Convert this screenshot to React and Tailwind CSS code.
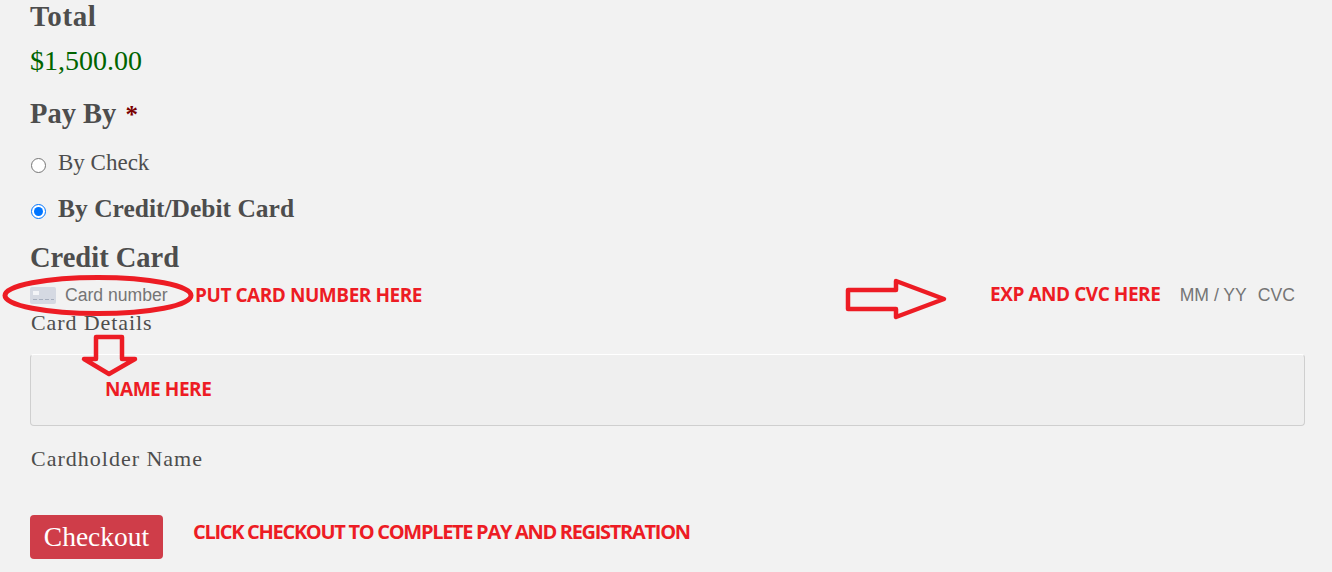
const serif = "font-['Georgia','Liberation_Serif',serif]";
const note = "font-['Open_Sans',sans-serif] font-bold text-[#ed1c24]";

function Radio({ checked }) {
  return (
    <span
      className={`w-[15px] h-[15px] rounded-full border bg-white shrink-0 flex items-center justify-center mt-[4px] ${
        checked ? "border-[#0075ff]" : "border-[#767676]"
      }`}
    >
      {checked && <span className="w-[9px] h-[9px] rounded-full bg-[#0075ff]" />}
    </span>
  );
}

function CardIcon() {
  return (
    <svg width="26" height="17" viewBox="0 0 26 17" className="shrink-0">
      <rect width="26" height="17" rx="2" fill="#d5d9e2" />
      <rect x="3" y="4" width="6" height="4" fill="#f3f4f7" />
      <path d="M3 12.5h4M9 12.5h4M15 12.5h4M21 12.5h3" stroke="#a6aebd" strokeWidth="1.2" />
    </svg>
  );
}

function Outline({ d, className, width, height }) {
  return (
    <svg width={width} height={height} viewBox={`0 0 ${width} ${height}`} className={className} fill="none">
      <path d={d} stroke="#ed1c24" strokeWidth="4.5" strokeLinejoin="round" />
    </svg>
  );
}

export default function App() {
  return (
    <div className={`relative w-[1332px] h-[572px] overflow-hidden bg-[#f2f2f2] pl-[30px] pr-[27px] text-[#4d4d4d] ${serif}`}>
      <h2 className="h-[32px] text-[29px] leading-[32px] font-bold tracking-[0.6px]">Total</h2>
      <p className="mt-[13px] h-[32px] text-[28px] leading-[32px] text-[#006400]">$1,500.00</p>
      <h2 className="mt-[21px] h-[32px] text-[28.5px] leading-[32px] font-bold">
        Pay By <span className="ml-[2px] text-[25px] text-[#7a0000]">*</span>
      </h2>
      <label className="mt-[18px] h-[30px] flex items-center gap-[12px] pl-[1px] text-[23px] leading-[30px]">
        <Radio />
        By Check
      </label>
      <label className="mt-[16px] h-[30px] flex items-center gap-[12px] pl-[1px] text-[25.5px] leading-[30px] font-bold">
        <Radio checked />
        By Credit/Debit Card
      </label>
      <h2 className="mt-[18px] h-[32px] text-[28.5px] leading-[32px] font-bold">Credit Card</h2>

      <div className="mt-[11px] h-[20px] flex items-center justify-between font-['Liberation_Sans',sans-serif] text-[17.6px] text-[#757575]">
        <div className="flex items-center gap-[9px]">
          <CardIcon />
          <span>Card number</span>
        </div>
        <div className="flex gap-[11px] pr-[10px]">
          <span>MM / YY</span>
          <span>CVC</span>
        </div>
      </div>

      <p className="mt-[6px] h-[24px] pl-[1px] text-[22px] leading-[24px] tracking-[0.9px]">Card Details</p>
      <div className="mt-[19px] h-[72px] rounded-[4px] border border-[#cfcfcf] border-t-white bg-[#efefef]" />
      <p className="mt-[21px] h-[24px] pl-[1px] text-[22px] leading-[24px] tracking-[1px]">Cardholder Name</p>

      <div className="mt-[44px] flex items-start">
        <button className="w-[133px] h-[44px] rounded-[4px] bg-[#cf3d49] text-[27.5px] leading-[42px] text-white">Checkout</button>
        <span className={`ml-[30px] mt-[4px] text-[20px] leading-[26px] tracking-[-1.3px] ${note}`}>CLICK CHECKOUT TO COMPLETE PAY AND REGISTRATION</span>
      </div>

      {/* annotations drawn on top of the form */}
      <svg width="196" height="44" viewBox="0 0 196 44" fill="none" className="absolute left-[2px] top-[274px]">
        <ellipse cx="96" cy="21.5" rx="93" ry="18" stroke="#ed1c24" strokeWidth="5" />
      </svg>
      <span className={`absolute left-[195px] top-[282px] text-[19px] leading-[26px] tracking-[-0.45px] ${note}`}>PUT CARD NUMBER HERE</span>
      <span className={`absolute left-[990px] top-[281px] text-[19px] leading-[26px] tracking-[-0.45px] ${note}`}>EXP AND CVC HERE</span>
      <span className={`absolute left-[105px] top-[376px] text-[19px] leading-[26px] tracking-[-0.45px] ${note}`}>NAME HERE</span>
      <Outline
        className="absolute left-[845px] top-[278px]"
        width={104}
        height={44}
        d="M3 12H51V3L99 21L51 39V31H3Z"
      />
      <Outline
        className="absolute left-[80px] top-[334px]"
        width={60}
        height={44}
        d="M16 3H42V25H55L29 40L4 25H16Z"
      />
    </div>
  );
}
